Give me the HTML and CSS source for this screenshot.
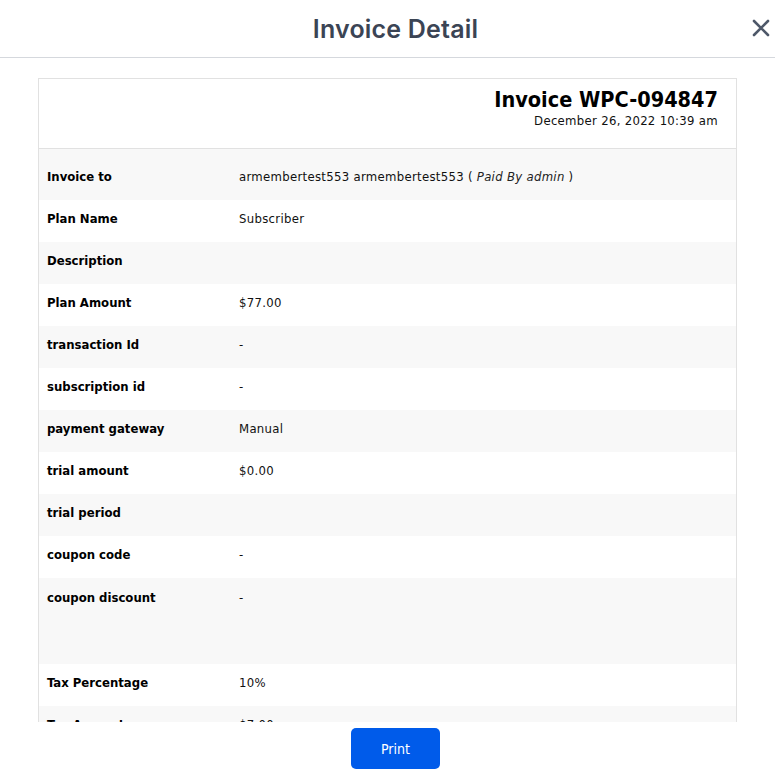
FILE: index.html
```html
<!DOCTYPE html>
<html>
<head>
<meta charset="utf-8">
<link rel="stylesheet" href="styles.css">
</head>
<body>
<div class="modal">
  <div class="modal-header">
    <h1 class="modal-title">Invoice Detail</h1>
    <button class="close-btn" aria-label="Close">
      <svg width="18" height="18" viewBox="0 0 18 18"><path d="M2 2 L16 16 M16 2 L2 16" stroke="#4e5869" stroke-width="2.6" stroke-linecap="round"/></svg>
    </button>
  </div>
  <div class="modal-body">
    <div class="invoice">
      <div class="invoice-head">
        <div class="invoice-no">Invoice WPC-094847</div>
        <div class="invoice-date">December 26, 2022 10:39 am</div>
      </div>
      <div class="rows">
        <div class="row first"><div class="label">Invoice to</div><div class="value">armembertest553 armembertest553 ( <i>Paid By admin</i> )</div></div>
        <div class="row"><div class="label">Plan Name</div><div class="value">Subscriber</div></div>
        <div class="row"><div class="label">Description</div><div class="value"></div></div>
        <div class="row"><div class="label">Plan Amount</div><div class="value">$77.00</div></div>
        <div class="row"><div class="label">transaction Id</div><div class="value">-</div></div>
        <div class="row"><div class="label">subscription id</div><div class="value">-</div></div>
        <div class="row"><div class="label">payment gateway</div><div class="value">Manual</div></div>
        <div class="row"><div class="label">trial amount</div><div class="value">$0.00</div></div>
        <div class="row"><div class="label">trial period</div><div class="value"></div></div>
        <div class="row"><div class="label">coupon code</div><div class="value">-</div></div>
        <div class="row tall"><div class="label">coupon discount</div><div class="value">-</div></div>
        <div class="row"><div class="label">Tax Percentage</div><div class="value">10%</div></div>
        <div class="row"><div class="label">Tax Amount</div><div class="value">$7.00</div></div>
        <div class="row"><div class="label">Total</div><div class="value">$84.00</div></div>
      </div>
    </div>
  </div>
  <div class="modal-footer">
    <button class="print-btn">Print</button>
  </div>
</div>
</body>
</html>
```
FILE: styles.css
```css
html, body {
  margin: 0;
  padding: 0;
  background: #ffffff;
}
.modal {
  width: 775px;
  height: 784px;
  display: flex;
  flex-direction: column;
  background: #fff;
}
.modal-header {
  height: 57px;
  border-bottom: 1px solid #d5d8dd;
  display: flex;
  align-items: center;
  justify-content: center;
  padding-left: 16px;
  position: relative;
  flex: none;
}
.modal-title {
  margin: 0;
  font-family: Inter, "Open Sans", sans-serif;
  font-weight: 600;
  font-size: 25px;
  color: #3b4454;
  letter-spacing: 0.2px;
}
.close-btn {
  position: absolute;
  right: 5px;
  top: 19px;
  border: 0;
  background: none;
  padding: 0;
  width: 18px;
  height: 18px;
  cursor: pointer;
}
.modal-body {
  flex: 1;
  overflow: hidden;
  padding: 20px 38px 0;
}
.invoice {
  border: 1px solid #e1e1e1;
  font-family: "DejaVu Sans Condensed", "Liberation Sans", Arial, sans-serif;
  font-size: 13px;
  color: #111;
}
.invoice-head {
  height: 70px;
  border-bottom: 1px solid #e1e1e1;
  text-align: right;
  padding-right: 18px;
  box-sizing: border-box;
  padding-top: 9px;
}
.invoice-no {
  font-weight: 700;
  font-size: 21.5px;
  line-height: 24px;
  color: #000;
}
.invoice-date {
  font-size: 13px;
  line-height: 17px;
  letter-spacing: 0.3px;
  color: #111;
}
.row {
  display: grid;
  grid-template-columns: 192px 1fr;
  padding: 0 8px;
  height: 42px;
  align-items: start;
  line-height: 18px;
  box-sizing: border-box;
  padding-top: 10px;
}
.row:nth-child(odd) {
  background: #f8f8f8;
}
.row.first {
  height: 51px;
  padding-top: 19px;
}
.row.tall {
  height: 86px;
  padding-top: 11px;
}
.label {
  font-weight: 700;
  color: #000;
}
.value {
  letter-spacing: 0.3px;
}
.value i {
  color: #222;
}
.modal-footer {
  height: 62px;
  flex: none;
  display: flex;
  justify-content: center;
  padding-top: 6px;
  padding-left: 16px;
  box-sizing: border-box;
}
.print-btn {
  width: 89px;
  height: 41px;
  background: #005bea;
  color: #fff;
  border: 0;
  border-radius: 5px;
  font-family: "DejaVu Sans Condensed", "Liberation Sans", Arial, sans-serif;
  font-size: 14px;
  font-weight: 500;
}
```
